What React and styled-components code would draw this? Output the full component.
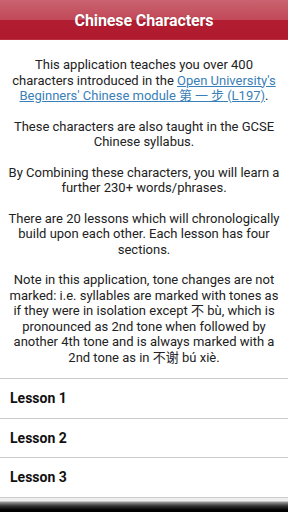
import styled, { createGlobalStyle } from 'styled-components';

const GlobalStyle = createGlobalStyle`
  html, body {
    margin: 0;
    padding: 0;
    background: #ffffff;
  }
  body {
    font-family: Roboto, "Noto Sans CJK SC", sans-serif;
  }
`;

const lessons = ['Lesson 1', 'Lesson 2', 'Lesson 3'];

function App() {
  return (
    <Screen>
      <GlobalStyle />
      <Header>
        <Title>Chinese Characters</Title>
      </Header>
      <Intro>
        <Paragraph>
          This application teaches you over 400 characters introduced in the{' '}
          <Link href="#">
            Open University's Beginners' Chinese module <Han>第 一 步</Han> (L197)
          </Link>
          .
        </Paragraph>
        <Paragraph>These characters are also taught in the GCSE Chinese syllabus.</Paragraph>
        <Paragraph>By Combining these characters, you will learn a further 230+ words/phrases.</Paragraph>
        <Paragraph>
          There are 20 lessons which will chronologically build upon each other. Each lesson has four
          sections.
        </Paragraph>
        <Paragraph>
          Note in this application, tone changes are not marked: i.e. syllables are marked with tones
          as if they were in isolation except <Han>不</Han> bù, which is pronounced as 2nd tone when
          followed by another 4th tone and is always marked with a 2nd tone as in <Han>不谢</Han> bú
          xiè.
        </Paragraph>
      </Intro>
      <LessonList>
        {lessons.map((name) => (
          <LessonRow key={name}>{name}</LessonRow>
        ))}
      </LessonList>
      <BottomShade />
    </Screen>
  );
}

const Screen = styled.div`
  width: 288px;
  height: 512px;
  display: flex;
  flex-direction: column;
  overflow: hidden;
  background: #ffffff;
`;

const Header = styled.header`
  height: 40px;
  flex-shrink: 0;
  display: flex;
  align-items: center;
  justify-content: center;
  background: linear-gradient(
    to bottom,
    #c9636f 0%,
    #c24858 50%,
    #b31d31 50%,
    #b01a2e 97%,
    #c0404f 100%
  );
`;

const Title = styled.h1`
  margin: 0;
  font-size: 16px;
  font-weight: 700;
  color: #ffffff;
  letter-spacing: -0.1px;
  text-shadow: 0 0 1px rgba(0, 0, 0, 0.3);
`;

const Intro = styled.section`
  padding: 17px 8px 13px;
  flex-shrink: 0;
  display: flex;
  flex-direction: column;
  gap: 15px;
`;

const Paragraph = styled.p`
  margin: 0;
  text-align: center;
  font-size: 13px;
  line-height: 15.5px;
  color: #222222;
`;

const Han = styled.span`
  font-family: "Noto Sans CJK SC", sans-serif;
  line-height: 1;
`;

const Link = styled.a`
  color: #3a7fb8;
  text-decoration: underline;
`;

const LessonList = styled.ul`
  list-style: none;
  margin: 0;
  padding: 0;
  border-top: 1px solid #cccccc;
`;

const LessonRow = styled.li`
  height: 38.5px;
  display: flex;
  align-items: center;
  padding-left: 10px;
  font-size: 14px;
  font-weight: 700;
  color: #111111;
  border-bottom: 1px solid #cccccc;
`;

const BottomShade = styled.div`
  flex: 1;
  background: linear-gradient(
    to bottom,
    #eeeeee 0px,
    #eeeeee 3px,
    #9a9a9a 4px,
    #333333 8px,
    #000000 12px
  );
`;

export default App;
